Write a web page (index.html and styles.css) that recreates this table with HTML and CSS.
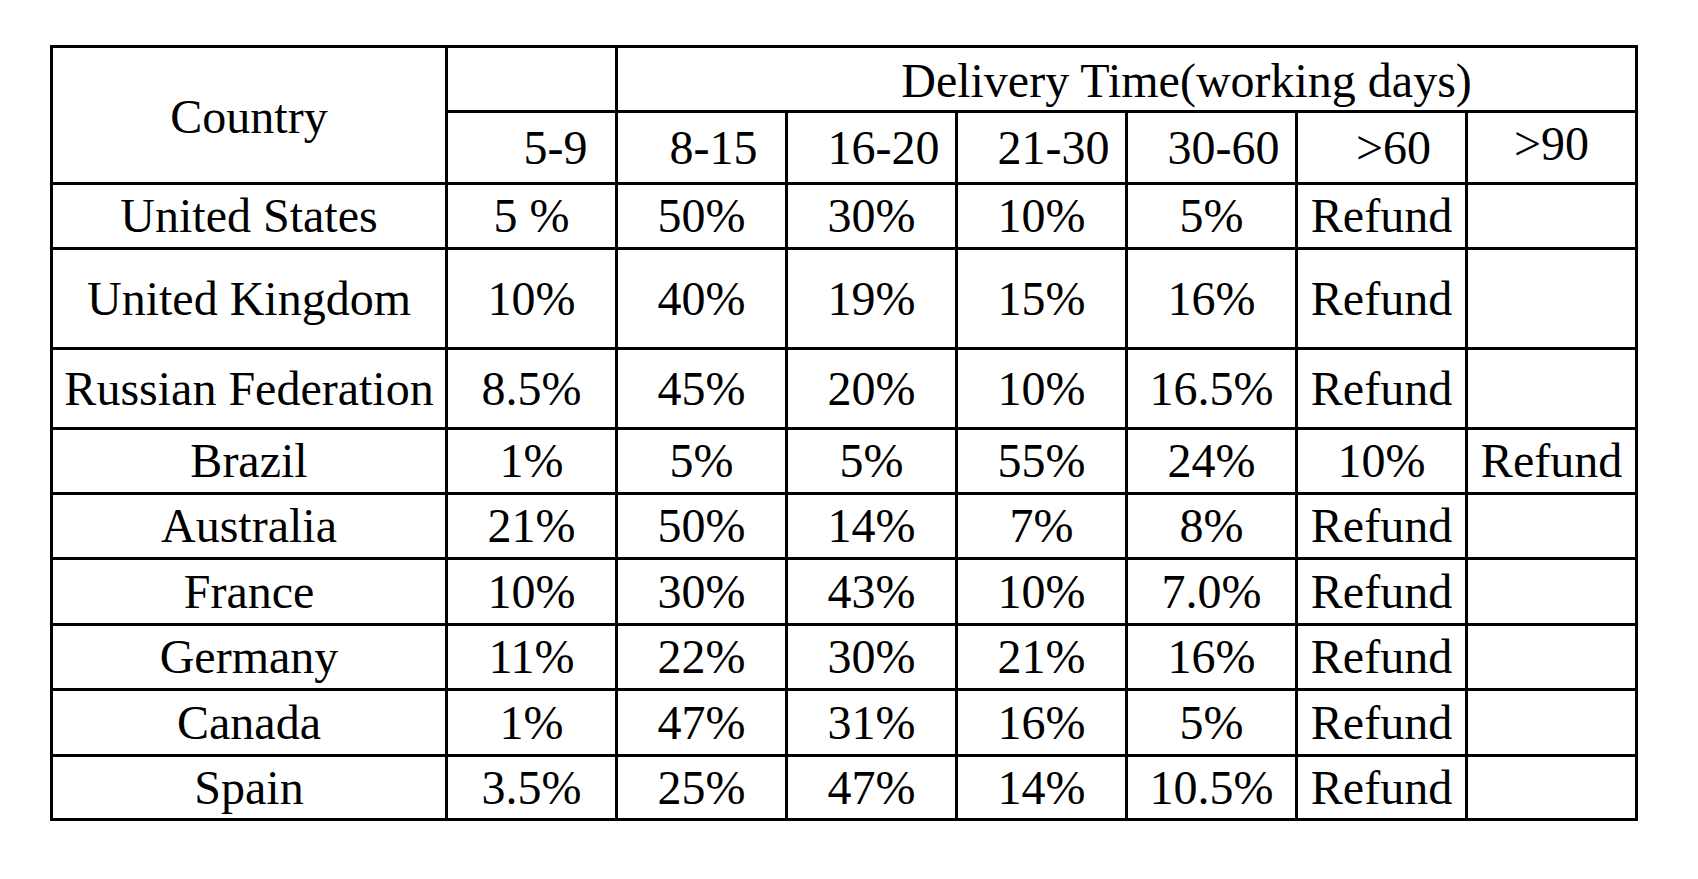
FILE: index.html
```html
<!DOCTYPE html>
<html lang="en">
<head>
<meta charset="utf-8">
<title>Delivery Time</title>
<link rel="stylesheet" href="styles.css">
</head>
<body>
<table class="delivery">
  <colgroup>
    <col class="col-country">
    <col class="col-val"><col class="col-val"><col class="col-val"><col class="col-val">
    <col class="col-val"><col class="col-val"><col class="col-val">
  </colgroup>
  <thead>
    <tr class="h-top">
      <th rowspan="2" class="country-head">Country</th>
      <th></th>
      <th colspan="6" class="dt-head">Delivery Time(working days)</th>
    </tr>
    <tr class="h-sub">
      <th class="first-range">5-9</th>
      <th class="range">8-15</th>
      <th class="range">16-20</th>
      <th class="range">21-30</th>
      <th class="range">30-60</th>
      <th class="range">&gt;60</th>
      <th class="last-range">&gt;90</th>
    </tr>
  </thead>
  <tbody>
    <tr class="r65"><td>United States</td><td>5 %</td><td>50%</td><td>30%</td><td>10%</td><td>5%</td><td>Refund</td><td></td></tr>
    <tr class="r100"><td>United Kingdom</td><td>10%</td><td>40%</td><td>19%</td><td>15%</td><td>16%</td><td>Refund</td><td></td></tr>
    <tr class="r80"><td>Russian Federation</td><td>8.5%</td><td>45%</td><td>20%</td><td>10%</td><td>16.5%</td><td>Refund</td><td></td></tr>
    <tr class="r65"><td>Brazil</td><td>1%</td><td>5%</td><td>5%</td><td>55%</td><td>24%</td><td>10%</td><td>Refund</td></tr>
    <tr class="r65"><td>Australia</td><td>21%</td><td>50%</td><td>14%</td><td>7%</td><td>8%</td><td>Refund</td><td></td></tr>
    <tr class="r66"><td>France</td><td>10%</td><td>30%</td><td>43%</td><td>10%</td><td>7.0%</td><td>Refund</td><td></td></tr>
    <tr class="r65"><td>Germany</td><td>11%</td><td>22%</td><td>30%</td><td>21%</td><td>16%</td><td>Refund</td><td></td></tr>
    <tr class="r66"><td>Canada</td><td>1%</td><td>47%</td><td>31%</td><td>16%</td><td>5%</td><td>Refund</td><td></td></tr>
    <tr class="r64"><td>Spain</td><td>3.5%</td><td>25%</td><td>47%</td><td>14%</td><td>10.5%</td><td>Refund</td><td></td></tr>
  </tbody>
</table>
</body>
</html>
```
FILE: styles.css
```css
html, body {
  margin: 0;
  padding: 0;
  background: #ffffff;
}

body {
  padding: 45px 0 0 50px;
  font-family: "Liberation Serif", "Times New Roman", serif;
  color: #000000;
}

.delivery {
  border-collapse: collapse;
  table-layout: fixed;
  width: 1588px;
  font-size: 48px;
  line-height: 1;
}

.col-country { width: 395px; }
.col-val { width: 170px; }

.delivery th,
.delivery td {
  border: 3px solid #000000;
  padding: 0;
  text-align: center;
  vertical-align: middle;
  font-weight: normal;
  white-space: nowrap;
  overflow: visible;
}

.delivery .h-top { height: 65px; }
.delivery .h-sub { height: 72px; }

.delivery .country-head { padding-top: 4px; }

.delivery .dt-head {
  padding-left: 120px;
  padding-top: 4px;
}

.delivery .first-range { padding-left: 48px; }
.delivery .range { padding-left: 24px; }
.delivery .last-range { padding-bottom: 8px; }

.delivery .r64 { height: 64px; }
.delivery .r65 { height: 65px; }
.delivery .r66 { height: 66px; }
.delivery .r80 { height: 80px; }
.delivery .r100 { height: 100px; }
```
